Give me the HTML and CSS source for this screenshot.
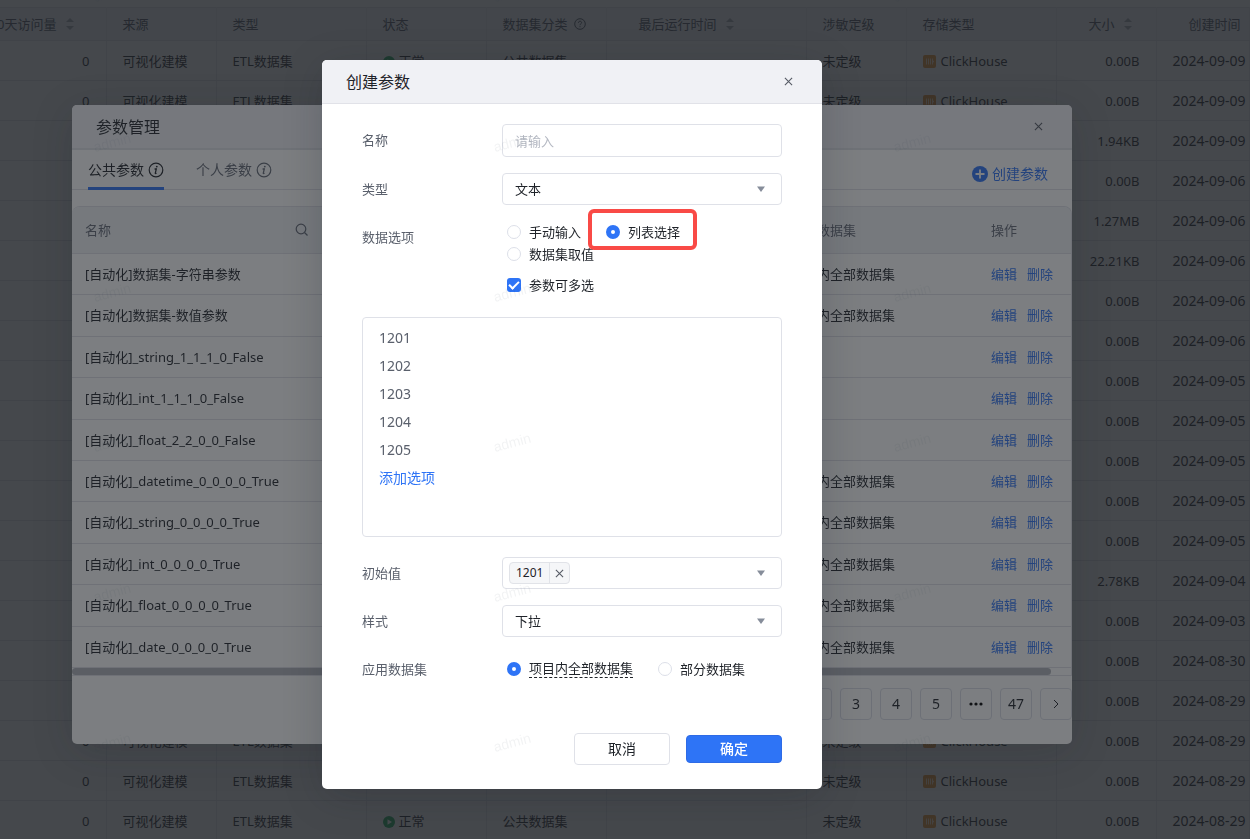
FILE: index.html
```html
<!DOCTYPE html>
<html lang="zh-CN">
<head>
<meta charset="utf-8">
<meta name="viewport" content="width=device-width, initial-scale=1">
<title>创建参数</title>
<link rel="stylesheet" href="styles.css">
</head>
<body>
<svg class="sprite" aria-hidden="true">
  <symbol id="i-sort" viewBox="0 0 8 14"><path d="M4 1l4 4H0zM4 13l4-4H0z" fill="currentColor"/></symbol>
  <symbol id="i-close" viewBox="0 0 10 10"><path d="M1 1l8 8M9 1l-8 8" fill="none" stroke="currentColor" stroke-width="1.2"/></symbol>
  <symbol id="i-caret" viewBox="0 0 8 6"><path d="M0 0.5h8L4 6z" fill="currentColor"/></symbol>
  <symbol id="i-info" viewBox="0 0 16 16"><circle cx="8" cy="8" r="6.8" fill="none" stroke="currentColor" stroke-width="1.2"/><path d="M6.6 7h1.7l-1 4.2c-.1.5.3.5 1.2 0" fill="none" stroke="currentColor" stroke-width="1.3"/><circle cx="8.8" cy="4.6" r="0.9" fill="currentColor"/></symbol>
  <symbol id="i-help" viewBox="0 0 12 12"><circle cx="6" cy="6" r="5.3" fill="none" stroke="currentColor"/><path d="M4.4 4.8c0-2.1 3.2-2.1 3.2-.1C7.600 5.800 6 5.800 6 7.200M6 8.200v1" fill="none" stroke="currentColor"/></symbol>
  <symbol id="i-run" viewBox="0 0 12 12"><circle cx="6" cy="6" r="6" fill="#1fae5b"/><path d="M4.500 3.200v5.600L9 6z" fill="#fff"/></symbol>
  <symbol id="i-house" viewBox="0 0 13 13"><rect width="13" height="13" rx="2" fill="#e89132"/><path d="M3.500 3.500v6M5.500 3.500v6M7.500 3.500v6M9.500 3.500v6M10.500 5.800v1.500" stroke="#fff" stroke-width="0.7"/></symbol>
</svg>

<main class="page">
  <table class="datasets">
    <colgroup><col class="w-visits"><col class="w-source"><col class="w-kind"><col class="w-mid"><col class="w-mid"><col class="w-run"><col class="w-short"><col class="w-kind"><col class="w-short"><col></colgroup>
    <thead>
      <tr>
        <th class="visits"><div>0天访问量<svg class="sort"><use href="#i-sort"/></svg></div></th>
        <th>来源</th><th>类型</th><th>状态</th>
        <th>数据集分类<svg class="help"><use href="#i-help"/></svg></th>
        <th class="run">最后运行时间<svg class="sort"><use href="#i-sort"/></svg></th>
        <th>涉敏定级</th><th>存储类型</th>
        <th class="run">大小<svg class="sort"><use href="#i-sort"/></svg></th>
        <th class="run">创建时间</th>
      </tr>
    </thead>
    <tbody id="dataset-rows"></tbody>
  </table>
</main>

<div class="overlay overlay-manage">
  <section class="dialog manage" aria-labelledby="manage-title">
    <header class="dialog-head manage-head">
      <h2 id="manage-title">参数管理</h2>
      <button class="close" type="button" aria-label="关闭"><svg><use href="#i-close"/></svg></button>
    </header>
    <div class="tabs">
      <button class="tab active" type="button">公共参数<svg><use href="#i-info"/></svg></button>
      <button class="tab" type="button">个人参数<svg><use href="#i-info"/></svg></button>
      <button class="create" type="button"><svg viewBox="0 0 16 16"><circle cx="8" cy="8" r="8" fill="currentColor"/><path d="M8 3.500v9M3.500 8h9" stroke="#fff" stroke-width="1.800"/></svg>创建参数</button>
    </div>
    <div class="params-wrap">
      <table class="params">
        <colgroup><col class="p-name"><col><col class="p-set"><col class="p-ops"></colgroup>
        <thead>
          <tr>
            <th><div class="name-head">名称<svg viewBox="0 0 13 13"><circle cx="6" cy="6" r="4.800" fill="none" stroke="currentColor" stroke-width="1.200"/><path d="M9.500 9.500l3 3" stroke="currentColor" stroke-width="1.200"/></svg></div></th>
            <th></th><th>应用数据集</th><th>操作</th>
          </tr>
        </thead>
        <tbody id="param-rows"></tbody>
      </table>
      <div class="scroll-track"><div class="scroll-thumb"></div></div>
    </div>
    <nav class="pager" aria-label="分页">
      <button type="button">2</button><button type="button">3</button><button type="button">4</button><button type="button">5</button>
      <button type="button" aria-label="更多"><svg viewBox="0 0 14 4"><circle cx="2" cy="2" r="1.600"/><circle cx="7" cy="2" r="1.600"/><circle cx="12" cy="2" r="1.600"/></svg></button>
      <button type="button">47</button>
      <button class="next" type="button" aria-label="下一页"><svg viewBox="0 0 6 10"><path d="M1 1l4 4-4 4" fill="none" stroke="currentColor"/></svg></button>
    </nav>
  </section>
</div>

<div class="overlay overlay-create">
  <form class="dialog create-dialog" aria-labelledby="create-title">
    <header class="dialog-head create-head">
      <h2 id="create-title">创建参数</h2>
      <button class="close" type="button" aria-label="关闭"><svg><use href="#i-close"/></svg></button>
    </header>
    <div class="form">
      <div class="field">
        <label for="name">名称</label>
        <input class="box text-box" id="name" type="text" placeholder="请输入">
      </div>
      <div class="field">
        <label for="type">类型</label>
        <div class="select"><select class="box" id="type"><option>文本</option></select><svg><use href="#i-caret"/></svg></div>
      </div>
      <div class="field">
        <span class="label">数据选项</span>
        <div class="options">
          <div class="choices">
            <label class="choice"><input type="radio" name="source">手动输入</label>
            <label class="choice marked"><input type="radio" name="source" checked>列表选择</label>
            <label class="choice"><input type="radio" name="source">数据集取值</label>
          </div>
          <label class="choice"><input type="checkbox" checked>参数可多选</label>
        </div>
      </div>
      <div class="values">
        <ul><li>1201</li><li>1202</li><li>1203</li><li>1204</li><li>1205</li></ul>
        <a href="#">添加选项</a>
      </div>
      <div class="field">
        <span class="label">初始值</span>
        <div class="select"><div class="box tags"><span class="tag"><span>1201</span><button type="button" aria-label="移除 1201"><svg><use href="#i-close"/></svg></button></span></div><svg><use href="#i-caret"/></svg></div>
      </div>
      <div class="field">
        <label for="style">样式</label>
        <div class="select"><select class="box" id="style"><option>下拉</option></select><svg><use href="#i-caret"/></svg></div>
      </div>
      <div class="field">
        <span class="label">应用数据集</span>
        <div class="scope">
          <label class="choice"><input type="radio" name="scope" checked><span class="hint">项目内全部数据集</span></label>
          <label class="choice"><input type="radio" name="scope">部分数据集</label>
        </div>
      </div>
      <footer class="actions">
        <button class="cancel" type="button">取消</button>
        <button class="confirm" type="submit">确定</button>
      </footer>
    </div>
  </form>
</div>

<svg class="watermark" aria-hidden="true">
  <defs><pattern id="mark" width="400" height="150" patternUnits="userSpaceOnUse"><text transform="translate(95 2) rotate(-15)">admin</text><text transform="translate(95 152) rotate(-15)">admin</text></pattern></defs>
  <rect width="100%" height="100%" fill="url(#mark)"/>
</svg>
<script src="script.js"></script>
</body>
</html>
```

FILE: styles.css
```css
* { box-sizing: border-box; }
body {
  margin: 0;
  overflow: hidden;
  background: #fff;
  color: #1f2329;
  font: 13px/22px "Noto Sans", "Noto Sans CJK SC", sans-serif;
}
button, input, select { font: inherit; color: inherit; }
button { padding: 0; border: 0; background: none; cursor: pointer; }
h2, ul { margin: 0; padding: 0; }
ul { list-style: none; }
a { color: #2e74f6; text-decoration: none; }
.sprite { position: absolute; width: 0; height: 0; }

.page { height: 100vh; padding-top: 7px; overflow: hidden; }
.datasets { width: 100%; table-layout: fixed; border-collapse: collapse; border-top: 1px solid #dfe1e8; }
.datasets th, .datasets td {
  height: 40px;
  padding: 0 16px;
  border-bottom: 1px solid #dfe1e8;
  border-right: 1px solid #e6e8ee;
  text-align: left;
  font-weight: 400;
  white-space: nowrap;
}
.datasets th { height: 33px; background: #f0f2f9; color: #4e5360; }
.w-visits { width: 106px; }
.w-source { width: 110px; }
.w-kind { width: 150px; }
.w-mid { width: 120px; }
.w-run { width: 200px; }
.w-short { width: 100px; }
.visits div { display: flex; align-items: center; justify-content: flex-end; margin-right: 16px; }
.datasets .run { padding-left: 32px; }
.sort { width: 8px; height: 14px; margin-left: 9px; color: #a3a7b2; vertical-align: -2px; flex: none; }
.help { width: 12px; height: 12px; margin-left: 6px; vertical-align: -1px; }
.datasets td.num { text-align: right; }
.datasets td.date { font-size: 14px; }
.icon { width: 12px; height: 12px; margin-right: 4px; vertical-align: -2px; }
.icon-house { width: 13px; height: 13px; margin-right: 5px; vertical-align: -2px; }

.overlay {
  position: fixed;
  inset: 0;
  display: flex;
  justify-content: center;
  align-items: flex-start;
  padding-right: 106px;
  background: rgba(30, 33, 38, 0.58);
}
.overlay-manage { padding-top: 105px; }
.overlay-create { padding-top: 60px; }
.dialog { border-radius: 5px; background: #fff; box-shadow: 0 8px 40px rgba(20, 24, 34, 0.2); overflow: hidden; }
.dialog-head { display: flex; align-items: center; justify-content: space-between; padding: 0 29px 0 24px; background: #f0f1f5; }
.dialog-head h2 { font-size: 16px; font-weight: 400; }
.close { display: flex; color: #555a64; }
.close svg { width: 9px; height: 9px; }

.manage { width: 1000px; }
.manage-head { height: 45px; border-bottom: 2px solid #e1e3e8; }
.tabs { display: flex; gap: 32px; padding: 0 24px 0 16px; height: 40px; border-bottom: 1px solid #dfe1e8; }
.tab { display: flex; align-items: center; gap: 4px; margin-bottom: -1px; padding-top: 3px; border-bottom: 3px solid transparent; font-size: 14px; color: #646a76; }
.tab svg { width: 16px; height: 16px; }
.tab.active { border-color: #2e74f6; color: #1f2329; }
.create { display: flex; align-items: center; gap: 4px; margin-left: auto; padding-top: 8px; font-size: 14px; color: #2e74f6; }
.create svg { width: 16px; height: 16px; }
.params-wrap { margin-top: 16px; border: 1px solid #dfe1e8; border-width: 1px 1px 1px 0; border-radius: 8px 8px 0 0; overflow: hidden; }
.params { width: 100%; table-layout: fixed; border-collapse: collapse; }
.params th, .params td { height: 41px; padding: 0 13px; border-bottom: 1px solid #dfe1e8; text-align: left; font-weight: 400; white-space: nowrap; }
.params th { height: 46px; background: #f0f2f6; color: #646a76; }
.params tbody tr:nth-child(5n+2) td, .params tbody tr:nth-child(5n+4) td { height: 42px; }
.p-name { width: 249px; }
.p-set { width: 200px; }
.p-ops { width: 93px; }
.name-head { display: flex; align-items: center; justify-content: space-between; }
.name-head svg { width: 13px; height: 13px; }
.params td:last-child a + a { margin-left: 10px; }
.scroll-track { height: 7px; }
.scroll-thumb { width: 98%; height: 7px; border-radius: 4px; background: #b0b4ba; }
.pager { display: flex; justify-content: flex-end; gap: 8px; padding: 12px 0 24px; }
.pager button { display: flex; align-items: center; justify-content: center; width: 32px; height: 32px; border: 1px solid #dcdee6; border-radius: 4px; font-size: 14px; }
.pager svg { width: 14px; height: 4px; }
.pager .next svg { width: 6px; height: 10px; }

.create-dialog { width: 500px; }
.create-head { height: 44px; border-bottom: 1px solid #e1e2e8; }
.form { display: flex; flex-direction: column; gap: 16px; padding: 20px 40px 24px; }
.field { display: grid; grid-template-columns: 140px 1fr; }
.field > label, .label { line-height: 32px; color: #5a606c; }
.box { width: 100%; height: 32px; padding: 0 12px; border: 1px solid #dfe1e8; border-radius: 4px; background: #fff; outline: 0; }
.text-box { height: 33px; }
.text-box::placeholder { color: #b4b8c2; opacity: 1; }
.select { position: relative; }
.select select { display: block; appearance: none; }
.select > svg { position: absolute; top: 13px; right: 17px; width: 8px; height: 6px; color: #868d9a; pointer-events: none; }
.tags { display: flex; align-items: center; padding: 0 6px; }
.tag { display: flex; height: 22px; border: 1px solid #e1e3e8; border-radius: 4px; background: #f5f6f8; line-height: 20px; font-size: 12px; }
.tag span { padding: 0 6px; border-right: 1px solid #e1e3e8; }
.tag button { display: flex; align-items: center; padding: 0 5px; color: #555a64; }
.tag svg { width: 9px; height: 9px; }
.choices { display: flex; flex-wrap: wrap; column-gap: 25px; margin-bottom: 9px; }
.options, .scope { padding-left: 5px; }
.scope { display: flex; align-items: center; gap: 25px; }
.choice { display: flex; align-items: center; gap: 8px; height: 22px; }
.choice input { appearance: none; display: grid; place-items: center; width: 14px; height: 14px; margin: 0; border: 1px solid #dcdfe8; border-radius: 50%; background: #fff; }
.choice input:checked { border: 5px solid #2e74f6; }
.choice input[type="checkbox"] { border: 0; border-radius: 3px; background: #2e74f6; }
.choice input[type="checkbox"]::after { content: ""; width: 8px; height: 4px; margin-bottom: 2px; border: solid #fff; border-width: 0 0 2px 2px; transform: rotate(-45deg); }
.marked { position: relative; }
.marked::after { content: ""; position: absolute; inset: -12px -17px -7px -18px; border: 4px solid #f94a46; border-radius: 6px; }
.hint { line-height: 17px; border-bottom: 1px dashed #1f2329; }
.values { height: 220px; margin: 5px 0 4px; padding: 6px 16px; border: 1px solid #dfe1e8; border-radius: 4px; font-size: 14px; line-height: 28px; color: #5a606c; }
.actions { display: flex; justify-content: flex-end; align-items: center; gap: 16px; padding-top: 32px; }
.actions button { width: 96px; height: 32px; border: 1px solid #dfe1e8; border-radius: 4px; font-size: 14px; }
.actions .confirm { height: 28px; border-color: #2e6be6; background: #2e74f6; color: #fff; font-weight: 500; }

.watermark { position: fixed; inset: 0; width: 100%; height: 100%; pointer-events: none; }
.watermark text { font: 14px "Liberation Sans", sans-serif; fill: rgba(40, 45, 60, 0.06); }
```

FILE: script.js
```js
const sizes = { 2: "1.94KB", 4: "1.27MB", 5: "22.21KB", 13: "2.78KB" };
const dates = [
  ...Array(3).fill("2024-09-09"), ...Array(5).fill("2024-09-06"), ...Array(5).fill("2024-09-05"),
  "2024-09-04", "2024-09-03", "2024-08-30", ...Array(4).fill("2024-08-29")
];
document.getElementById("dataset-rows").innerHTML = dates.map((date, i) => `<tr>
  <td class="num">0</td><td>可视化建模</td><td>ETL数据集</td>
  <td><svg class="icon"><use href="#i-run"/></svg>正常</td><td>公共数据集</td><td></td><td>未定级</td>
  <td><svg class="icon-house"><use href="#i-house"/></svg>ClickHouse</td>
  <td class="num">${sizes[i] || "0.00B"}</td><td class="date">${date}</td></tr>`).join("");

const params = [
  ["数据集-字符串参数", 1], ["数据集-数值参数", 1], ["_string_1_1_1_0_False", 0], ["_int_1_1_1_0_False", 0],
  ["_float_2_2_0_0_False", 0], ["_datetime_0_0_0_0_True", 1], ["_string_0_0_0_0_True", 1],
  ["_int_0_0_0_0_True", 1], ["_float_0_0_0_0_True", 1], ["_date_0_0_0_0_True", 1]
];
document.getElementById("param-rows").innerHTML = params.map(([name, all]) => `<tr>
  <td>[自动化]${name}</td><td></td><td>${all ? "项目内全部数据集" : ""}</td>
  <td><a href="#">编辑</a><a href="#">删除</a></td></tr>`).join("");
```
